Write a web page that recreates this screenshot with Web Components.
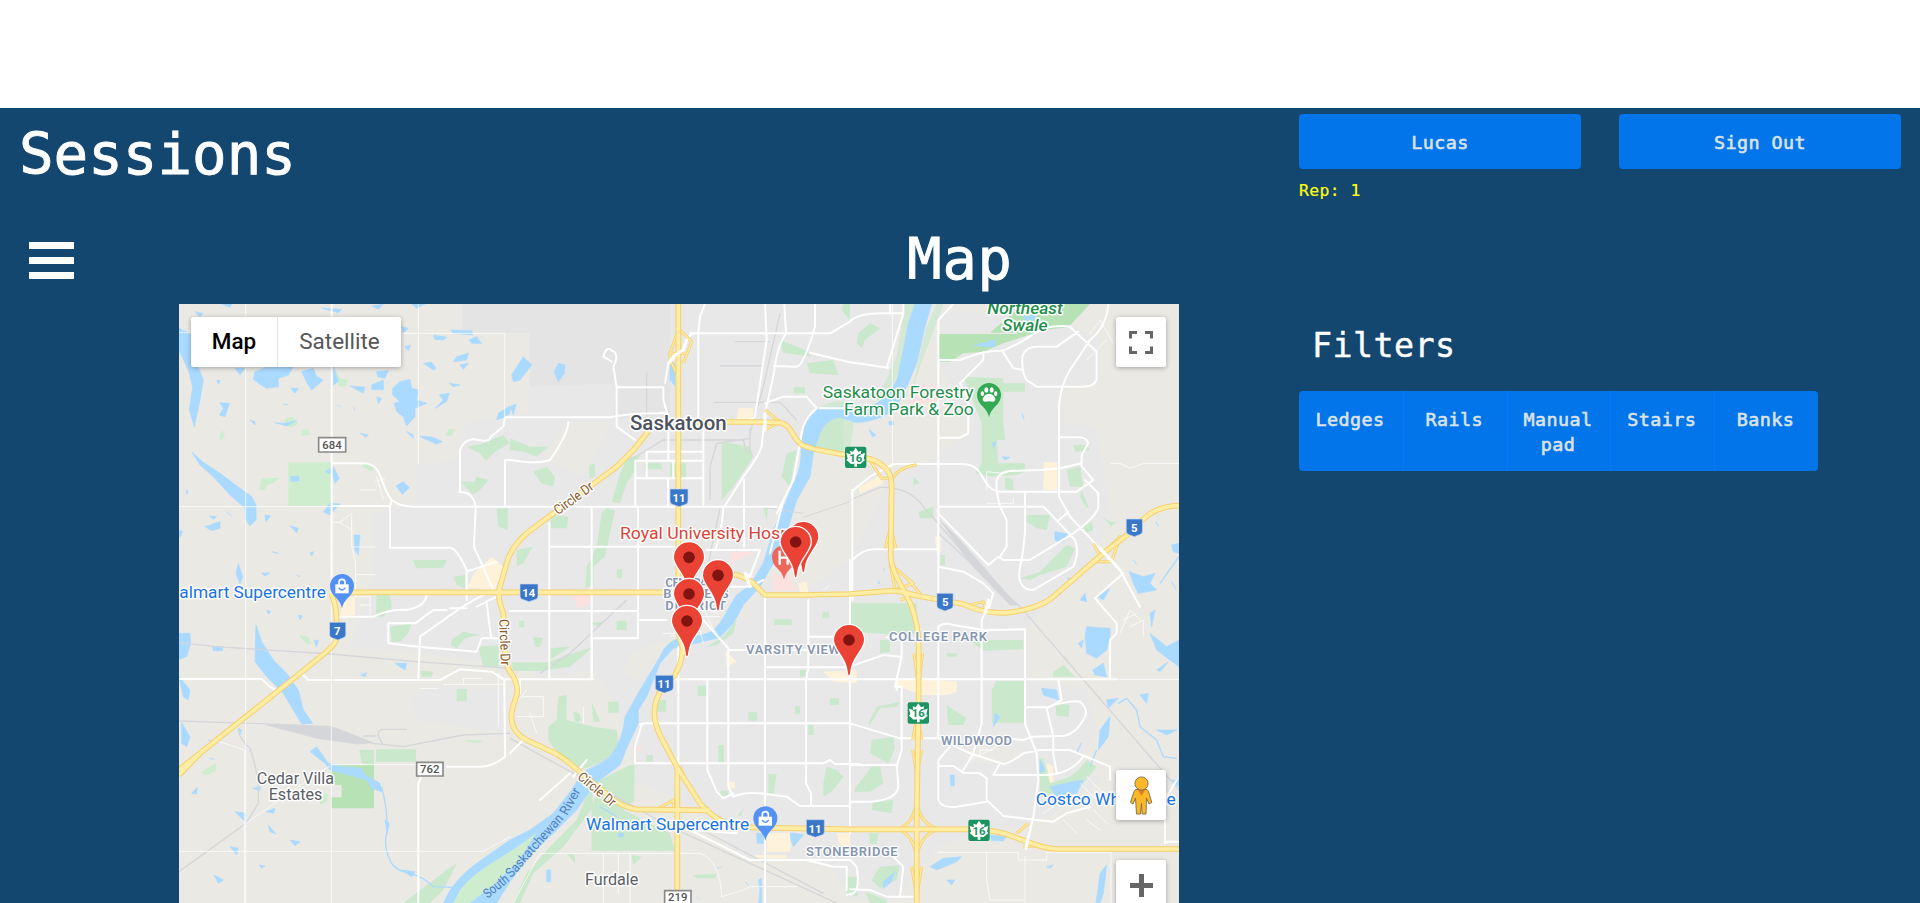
<!DOCTYPE html>
<html lang="en">
<head>
<meta charset="utf-8">
<title>Sessions</title>
<style>
html,body{margin:0;height:100%;overflow:hidden;background:#fff}
body{font-family:"DejaVu Sans Mono",monospace;color:#fff}
</style>
</head>
<body>
<session-app></session-app>

<script>
const define = (name, html) => {
  const tpl = document.createElement('template');
  tpl.innerHTML = html;
  customElements.define(name, class extends HTMLElement {
    constructor() {
      super();
      this.attachShadow({mode: 'open'}).append(tpl.content.cloneNode(true));
    }
  });
};

define('app-button', `
<style>
:host{display:flex;box-sizing:border-box;width:282px;height:55px;padding-top:2px;align-items:center;justify-content:center;border-radius:4px;background:#0275eb;color:#dde2e8;font-size:18.4px;letter-spacing:.42px;-webkit-text-stroke:.6px #dde2e8}
</style><slot></slot>`);

define('app-header', `
<style>
:host{display:flex;justify-content:space-between;height:114px;box-sizing:border-box;padding:0 19px 0 19px}
h1{margin:11px 0 0;font-size:57.5px;line-height:72px;font-weight:400;letter-spacing:0;-webkit-text-stroke:.9px #fff}
.actions{display:grid;grid-template-columns:282px 282px;column-gap:38px;padding-top:6px;align-content:start}
.rep{color:#ffff0a;font-size:16.4px;line-height:24px;letter-spacing:.42px;margin-top:10px;-webkit-text-stroke:.2px #ffff0a}
</style>
<h1><slot></slot></h1>
<div class="actions">
  <app-button>Lucas</app-button><app-button>Sign Out</app-button>
  <div class="rep">Rep: 1</div>
</div>`);

define('menu-toggle', `
<style>
:host{display:flex;flex-direction:column;gap:8px;width:45px}
i{height:7px;background:#fff}
</style><i></i><i></i><i></i>`);

define('page-heading', `
<style>
:host{display:grid;grid-template-columns:1fr auto 1fr;align-items:center;height:82px;box-sizing:border-box;padding:0 29px 10px}
menu-toggle{margin-top:3px}
h2{margin:1px 0 0;font-size:57px;line-height:72px;font-weight:400;letter-spacing:.9px;-webkit-text-stroke:.9px #fff}
</style>
<menu-toggle></menu-toggle><h2><slot></slot></h2><span></span>`);

define('filter-panel', `
<style>
:host{display:block;width:519px}
h3{margin:0 0 25px;padding-left:13px;font-size:33.3px;line-height:40px;font-weight:400;letter-spacing:.45px;-webkit-text-stroke:.4px #fff}
.group{display:grid;grid-template-columns:repeat(5,1fr);height:80px;border-radius:4px;overflow:hidden;background:#0275eb}
.group span{padding:16px 2px 0 0;text-align:center;line-height:25px;font-size:18.4px;letter-spacing:.42px;color:#dde2e8;-webkit-text-stroke:.6px #dde2e8;border-left:1px solid #007bff}
.group span:first-child{border-left:0}
</style>
<h3>Filters</h3>
<div class="group"><span>Ledges</span><span>Rails</span><span>Manual<br>pad</span><span>Stairs</span><span>Banks</span></div>`);

define('map-control', `
<style>
:host{display:flex;width:50px;height:50px;align-items:center;justify-content:center;background:#fff;border-radius:2.5px;box-shadow:0 1px 5px rgba(0,0,0,.3)}
</style><slot></slot>`);

define('map-type-control', `
<style>
:host{display:flex;height:50px;background:#fff;border-radius:2.5px;box-shadow:0 1px 5px rgba(0,0,0,.3);font-family:Roboto,sans-serif;font-size:22.5px;line-height:48px}
span{box-sizing:border-box;text-align:center;color:#565656}
.on{width:87px;color:#000;font-weight:500;border-right:1px solid #e4e4e4}
.off{width:123px}
</style><span class="on">Map</span><span class="off">Satellite</span>`);

define('map-canvas', `
<style>
:host{display:block}
svg{display:block}
text{font-family:Roboto,sans-serif;paint-order:stroke;stroke:#fff;stroke-width:9;stroke-linejoin:round}
.town{fill:#5b6067}.poi{fill:#1a73e8}.park{fill:#1e8e4b}.hood{fill:#8595b0;font-weight:600;stroke-width:7}
.num{stroke:none;font-weight:700;text-anchor:middle}
.hw{fill:none;stroke-linejoin:round;stroke-linecap:butt}
.w{fill:none;stroke:#fff;stroke-linejoin:round;stroke-linecap:round}
</style>
<svg width="1000" height="599" viewBox="27 12 3000 1797">
<defs>
  <g id="hwy">
    <path d="M1525 12V1000L1537 1040Q1540 1080 1515 1125L1485 1155Q1455 1190 1453 1235Q1453 1275 1475 1315L1520 1400L1590 1510Q1620 1545 1660 1565Q1710 1585 1780 1583L2040 1588H2410C2490 1588 2530 1612 2580 1628Q2620 1645 2660 1647H3030"/>
    <path d="M1525 366H1780L1830 368C1870 375 1865 420 1900 437C1940 452 1990 458 2040 467C2100 475 2130 480 2155 515Q2165 530 2165 560L2162 770C2165 820 2200 860 2225 920Q2246 980 2246 1040V1200L2240 1550V1809"/>
    <path d="M1435 393L1395 445L1340 500L1130 655L1070 700Q1020 745 1010 790L990 860Q980 890 1000 940L1005 1050Q1010 1100 1020 1115Q1040 1140 1042 1170C1042 1200 1020 1220 1025 1260Q1030 1300 1070 1320L1160 1362Q1190 1380 1240 1425L1310 1482Q1350 1520 1400 1528L1620 1531"/>
    <path d="M540 877H1525M1640 818L1700 825Q1735 835 1750 850L1785 885H1900L2040 882L2170 872Q2200 875 2240 887L2380 912Q2450 945 2520 937Q2610 925 2650 890L2800 760L2890 690C2920 650 2960 617 3030 617"/>
    <path d="M484 880Q500 920 500 960V1015Q498 1030 470 1055L390 1120L27 1410M27 1425L100 1350"/>
    <path d="M1522 1400V1780"/>
  </g>
  <g id="ramps">
    <path d="M1525 90L1500 160V180L1520 220M1530 90L1565 125L1540 190M1500 160H1545M2100 482L2135 535H2155M2165 545Q2175 505 2240 494M2145 745L2162 680L2178 745M2160 790L2175 870L2230 850L2170 800M2190 900L2250 880L2215 840M1785 330L1830 365L1785 390M2400 915L2440 905L2450 940M2770 730L2790 770L2850 710L2825 785H2775M2232 1060L2245 1160L2258 1060M2228 1320L2242 1240L2255 1320M2228 1350L2240 1420L2255 1350M2225 1700L2240 1790L2255 1700M1460 1528L1510 1500V1528M2540 1600L2575 1570M2560 1640L2620 1635M1510 1390L1500 1350M1530 1400L1560 1470M2180 1588Q2232 1575 2240 1500Q2248 1575 2310 1588Q2248 1600 2240 1680Q2232 1600 2180 1588Z"/>
  </g>
  <g id="drop"><path d="M0 108C-3 108-5 101-6 93C-10 50-47 30-47 0A47 47 0 1 1 47 0C47 30 10 50 6 93C5 101 3 108 0 108Z" fill="#ea4335" stroke="#fff" stroke-width="4"/><circle r="17.5" fill="#811411"/></g>
  <path id="poi" d="M0 67Q-3 50-18 35Q-36 20-36 0A36 36 0 0 1 36 0Q36 20 18 35Q3 50 0 67Z"/>
  <g id="bag"><path fill="#fff" d="M-20-5H20V22H-20Z"/><path fill="none" stroke="#fff" stroke-width="5" d="M-9-4V-11A9 9 0 0 1 9-11V-4"/><path fill="none" stroke="#5491f5" stroke-width="4" d="M-10 5Q0 19 10 5"/></g>
  <path id="shield" d="M-27-26H27V10Q27 20 17 21L0 27L-17 21Q-27 20-27 10Z" fill="#3a77c9" stroke="#c9daf1" stroke-width="2"/>
  <g id="leaf"><rect x="-32" y="-32" width="64" height="64" rx="6" fill="#1c9462"/><path fill="#fff" d="M0-29L8-17L17-20L15-9L28-13L24 4L28 8L14 20L4 19V28H-4V19L-14 20L-28 8L-24 4L-28-13L-15-9L-17-20L-8-17Z"/></g>
</defs>
<rect x="27" y="12" width="3000" height="1800" fill="#eae9e4"/>
<!-- built-up land -->
<g fill="#e8e8e8">
<path d="M878 12H2190L2160 260L2100 310L1960 315L1900 400L1850 620L1770 830L1700 900L1480 1030L1360 1260L1280 1110L1040 1140L940 1090L760 1060L540 1040L570 960L610 840V640L740 610V495L860 480L890 365L1075 340V98H878Z"/>
<path d="M2310 30L2620 50L2790 110V250L2680 270V370L2780 380L2820 620L2780 760L2640 900L2560 1000L2570 1130L2750 1170L2780 1300L2720 1400L2800 1440L2620 1560L2300 1640L2180 1800H2040L1980 1690L1720 1670L1540 1500L1400 1440L1400 1260L1480 1060L1700 980L1800 830L1900 880L2040 780L2070 720L2160 520L2290 480L2400 400L2340 260L2305 180Z"/>
<path d="M930 1170L1010 1160V1290L920 1290L740 1260L720 1190L820 1150Z"/>
</g>
<path fill="#e4e4e4" d="M878 12H1500V360L1330 355L1340 250L1080 260V98H878Z"/>
<g fill="#eae9e4"><path d="M1190 366H1320L1300 420L1260 480L1240 530L1150 490L1120 470ZM1490 1020L1380 1060L1360 1120L1410 1140ZM1020 1100L1180 1140L1170 1300L1060 1310Z"/><path d="M2370 1350L2500 1290L2560 1370L2520 1390L2400 1390ZM1920 620L2030 600L2020 700L1950 760L1900 740Z" opacity=".8"/></g>
<!-- commercial and medical land -->
<path fill="#fef3da" d="M1705 325H1750V358H1700ZM965 770L1000 800L975 870L890 865L915 815ZM2622 487H2662V570H2620ZM2065 565L2130 525L2140 550L2070 580ZM2180 1140L2230 1135L2360 1145V1175L2330 1185H2250L2180 1155ZM1665 1050L1700 1085L1670 1100ZM1960 1115L2060 1110V1150L1990 1145ZM520 890H555V945L510 948ZM1790 1600L1862 1598V1655L1790 1655ZM2000 1600H2040V1640L2010 1635ZM2630 1390L2650 1400V1450L2640 1455ZM2295 710H2312V755H2300ZM1885 850L1910 845L1915 880L1890 875ZM1675 1445H1695V1465H1675ZM1755 1665H1850V1675H1755Z"/>
<path fill="#fbe1e0" d="M1680 755L1760 755L1680 790ZM1810 820L1860 830L1880 870L1810 875ZM1205 880H1265V905L1225 928ZM1400 1338H1415V1355H1400ZM2240 255H2310V310H2220Z"/>
<!-- parks -->
<g fill="#c9e8cc">
<path fill="#ceedce" d="M355 487H485V617H355ZM268 570L275 535L330 533L310 550L290 555L285 570ZM495 205L510 235L535 240L525 262L505 258ZM345 355L370 350L383 370L365 382L342 375ZM395 390L415 388L420 405L395 408ZM155 390L165 405L155 424L147 412ZM835 387L856 388L845 407H826ZM387 1005L415 1010L425 1030L410 1033ZM95 1415L138 1390V1410L120 1422L100 1425ZM445 1490L475 1480L470 1505L450 1515ZM580 485L615 505L605 515L578 500ZM885 1320L940 1322L930 1328L890 1327Z"/>
<path fill="#b6e2b6" d="M483 1395H612V1525H483V1492H515V1455H483ZM2307 102H2540L2620 12H2760L2695 82L2620 90L2500 130L2440 155L2380 160L2340 185H2307ZM2460 98L2560 12H2640L2560 98Z"/>
<path d="M568 1350H612V1395L575 1390ZM618 1348H738V1385H618ZM890 440L935 432L1000 405L1020 430L975 455L948 482L930 460ZM872 545L915 545L918 530L955 540L930 570L910 585ZM980 625H1013V690L985 680ZM728 780H830L820 803L740 805ZM850 830L885 825V865L860 855ZM620 885H660L665 920L640 950H618ZM660 980L725 970L715 1000L690 1025H665ZM845 1020L880 995L930 1005L885 1015L860 1045L842 1035ZM925 1040L985 1036V1100L940 1102ZM752 1112L790 1115L785 1130H755ZM860 1167H890V1204H860ZM700 1809L830 1710L860 1690L820 1770L780 1809Z"/>
<path d="M1020 415L1080 440L1135 440L1100 470L1060 455L1020 450ZM1090 515L1130 500L1155 530L1150 560L1115 550ZM1258 495L1275 490V530L1258 535ZM1370 475L1410 465L1390 520L1370 550L1350 610L1325 605L1350 520ZM1425 490H1475V508H1425ZM1500 490H1548V530H1500ZM1310 625L1335 630L1320 700L1305 770L1270 800V860H1246L1250 800L1280 740L1295 640ZM1655 425L1740 440L1750 470L1690 560L1655 600ZM1830 120L1905 150L1925 170L1840 158ZM1910 190L1990 180L2005 225L1920 220ZM1870 262H1905V280H1870ZM1850 460L1880 450L1860 560L1835 530ZM1920 350L2020 340V470L1930 450L1940 400ZM2020 12H2040V60L2015 30ZM1040 750L1088 740L1060 790L1040 800ZM1145 645L1195 650L1190 685H1140ZM1340 808H1356V833H1340ZM1780 625L1795 620L1790 660Z"/>
<path d="M1950 320Q2010 290 2060 310L2040 450L1930 440ZM2205 12H2240L2190 200L2150 310L2120 300L2180 170ZM2270 80L2300 12H2320L2250 200L2220 290Z" opacity=".7"/>
<path d="M2100 70L2130 85L2085 120L2075 145L2060 130L2065 100ZM2380 230L2500 235V370L2505 420H2480L2485 490H2565V515L2540 525L2465 530L2415 520L2435 490V370ZM2230 530L2250 550L2230 555ZM2245 635L2290 620V655H2250ZM2460 250H2565V275H2460ZM2570 645H2640L2630 690L2600 685L2570 665ZM2505 530L2530 540V570L2505 568ZM2690 510L2730 500L2740 560L2700 560ZM2710 435H2750L2760 450L2715 455ZM2735 570L2755 620L2750 625L2730 590ZM2740 680L2765 665L2770 690L2750 698ZM2550 835L2610 815L2690 735L2715 745L2690 800L2610 825L2580 840ZM2795 650L2820 665H2840L2825 678ZM2312 765H2325V795H2312ZM2040 910H2240V1000L2200 1005L2040 995ZM2130 1020H2160V1055L2130 1060ZM2380 1005L2440 1020H2560V1048L2440 1052ZM2330 1060H2360V1070H2330ZM2480 1143H2562V1268H2465V1170ZM2330 1215L2390 1255L2380 1275H2335ZM2095 1270L2120 1220L2190 1205L2180 1220L2130 1225L2100 1275ZM2105 1320L2170 1310L2175 1345L2155 1390L2100 1360ZM2105 1400H2130L2140 1450L2100 1475H2055V1465ZM2110 1508L2170 1500L2165 1540L2105 1530ZM2650 1115L2680 1095L2715 1130L2650 1130ZM2655 1210L2700 1215L2695 1250L2660 1248ZM2608 1375H2620L2640 1450L2700 1430L2725 1410L2750 1380L2780 1400L2740 1450L2700 1490L2610 1480Z"/>
<path d="M1027 1087H1130L1270 1040L1200 1100L1110 1113H1027ZM1140 1045L1200 1040L1140 1080ZM1048 962H1063V982H1048ZM1090 1010L1120 1015L1110 1040H1095ZM1340 962H1370V990H1340ZM1260 970L1295 965L1290 980ZM1165 1190L1190 1185V1260L1270 1280L1340 1290L1350 1350L1290 1390L1230 1410L1170 1370L1135 1320V1280L1160 1260ZM1315 1205H1346V1238H1315ZM1210 1235Q1235 1235 1232 1260Q1210 1280 1210 1235ZM1265 1205L1290 1265H1270ZM1265 1530L1290 1440L1380 1395H1393V1500L1360 1530L1500 1600L1515 1652H1265ZM1583 1157H1608V1188H1583ZM1465 1200H1488V1235H1460ZM1430 1365H1448V1385H1430ZM1813 958H1865V975H1813ZM1957 935H1977V955H1957ZM1735 1237H1762V1262H1735ZM1875 1218H1890V1243H1875ZM1980 1195H2007V1215H1980ZM1645 1335H1662V1390H1645ZM1795 1422H1820L1810 1480H1795ZM1915 1275H1930V1305H1915ZM1970 1400L2000 1410L2020 1430L1990 1470L1960 1490V1450ZM1650 1475Q1675 1465 1675 1485L1655 1490ZM1890 1110H1908V1130H1890ZM1610 1040L1660 1010L1700 960L1690 1000L1640 1035L1590 1045ZM1570 1725L1640 1722L1635 1735H1580ZM1385 1665L1415 1670L1390 1695ZM1190 1660L1215 1665V1690ZM2025 1730H2062V1790L2030 1780ZM2098 1600H2125L2120 1632H2100ZM2130 1700L2190 1695L2180 1740L2130 1765L2105 1740ZM2085 1775L2150 1800V1809H2100ZM1700 1550L1720 1525L1715 1545ZM1030 1809L1070 1720L1140 1640L1220 1560L1265 1450L1270 1520L1180 1640L1090 1720L1050 1809Z"/>
</g>
<!-- river and lakes -->
<g fill="#aadaff" stroke="#aadaff" stroke-width="2" stroke-linejoin="round">
<path d="M2235 12L2215 70L2200 150L2182 235Q2160 290 2120 310Q2080 325 2020 320L1950 325Q1915 340 1900 390L1893 450Q1895 500 1875 540L1850 600L1810 690L1780 790L1740 855L1700 885L1675 925Q1650 980 1620 997Q1590 1010 1560 1007Q1490 1015 1470 1070Q1440 1120 1410 1170L1365 1250Q1360 1320 1320 1370Q1290 1395 1250 1410Q1220 1440 1205 1470L1150 1540L1080 1590L1020 1620L920 1690Q850 1740 820 1809H980L1020 1745L1080 1665L1150 1600L1220 1530L1255 1480L1290 1440L1350 1395L1372 1340L1405 1270V1230L1430 1190L1470 1090L1510 1045L1580 1030L1650 1012L1690 970L1720 915L1770 860L1810 790L1850 700L1880 600L1920 530L1930 460L1950 400Q1970 355 2010 352L2060 368Q2140 362 2180 320L2215 250L2240 190L2265 80L2285 12Z"/>
<path d="M27 85L70 105L80 190L100 240L88 310L73 380L58 330L68 260L55 210L27 150Z"/>
<path d="M66 457L100 487L150 520L200 557L245 590L258 615V660L240 678L228 660L225 625L180 585L130 530L90 495Z"/>
<path d="M258 975L275 1025L310 1080L350 1120L385 1170L400 1230L428 1270L395 1272L340 1180L290 1130L255 1085Z"/>
<path d="M255 215L290 200H370L355 225L325 235V260L290 265L265 250L250 238ZM395 215L430 205L440 230L460 240L425 270L412 250ZM490 200L505 245L490 255ZM540 258L585 262L580 280ZM620 215L655 212L645 235L622 230ZM605 255L640 240V270L605 268ZM620 290L635 295L625 312ZM668 265L690 245L720 238L725 265L745 270L740 300L770 310L735 325V350L710 378L700 350L680 335L672 310L690 305L668 285ZM760 190L785 187L798 205L790 210ZM790 105L830 112L820 120L795 118ZM842 90L905 92L908 105L850 100ZM897 120L920 110L935 130L905 130ZM705 140L722 135L715 152ZM860 170L895 160L890 180L850 185ZM870 195L895 190L880 208ZM838 250L870 255L850 260ZM808 285L838 280L830 305L795 325L820 300ZM150 308L178 310L165 350L148 345L160 325ZM195 205L225 205L210 225ZM140 240L152 243L145 252ZM240 360L255 365V375ZM315 368L345 370L380 362L350 378ZM340 312L355 315ZM362 265L385 265L375 280ZM570 400L595 405L588 412ZM710 395L730 405V415ZM750 408L790 412L817 425L800 432L760 415ZM980 360L985 340L1020 318V340L1005 350ZM695 80L715 85L700 98ZM725 12H765L740 25ZM605 18L640 12L625 28ZM155 12H185L180 22ZM455 25L515 28L505 38ZM75 35L98 40L90 50ZM500 315L512 320M552 320L554 332"/>
<path d="M465 515L490 500L508 535L495 550L488 525ZM360 530L385 528L388 542L365 545ZM678 557L700 545L718 563L697 583ZM460 635L480 610L510 612L480 645ZM285 645L302 648L288 665ZM105 680L150 665V685L125 692ZM118 648L140 650L130 658ZM360 678L385 685L380 698ZM170 636L185 648ZM205 790L218 830L210 852L198 820ZM275 820L300 818L285 828ZM305 755L325 760ZM420 758L432 755L425 768ZM552 705L570 705L565 765L555 750ZM380 825L390 830ZM27 690L38 695L30 712ZM48 570L55 575L50 583ZM27 1000L60 1000L62 1030L50 1070L27 1078ZM127 1040H158V1052H130ZM27 1130L60 1170L55 1200L40 1190ZM35 1268L60 1310L50 1340L35 1330ZM290 930L303 935L295 942ZM385 945L397 948L390 960ZM432 1022L445 1020L440 1040ZM675 1090L710 1090L705 1110L690 1100ZM572 1125L590 1118L585 1130ZM420 1355L440 1340L475 1390L515 1400L575 1405L585 1425L630 1450L635 1475L605 1465L590 1440L480 1410L465 1390ZM205 1285L215 1290L210 1305ZM65 1480L82 1462L80 1482ZM195 1535L228 1540L225 1565ZM250 1465L272 1460L268 1472ZM288 1535L315 1525L310 1540ZM295 1575L318 1602L300 1595ZM360 1620L390 1625L375 1637ZM180 1640L205 1645L200 1665ZM268 1695L285 1698L275 1705ZM132 1725L160 1740L145 1750ZM645 1560L658 1570L652 1600ZM695 1710L735 1715L725 1730ZM115 1320L130 1325ZM118 1375L133 1378Z"/>
<path d="M1060 170L1085 195L1050 240L1030 245L1025 225ZM1165 190L1185 195L1183 220L1165 245L1152 215ZM1500 190L1515 190V258L1500 240ZM1020 320L1038 312L1030 345ZM2415 135L2475 120V140L2440 140ZM2560 50L2600 45L2590 60H2565ZM2157 364H2170V375H2157ZM2098 390L2118 405L2108 412ZM2468 428L2478 425L2470 445ZM2497 470L2520 472L2505 480ZM2556 340L2562 358ZM2655 695L2695 702L2680 725L2655 722ZM2878 815L2920 830L2955 820L2940 850L2960 870L2905 880L2890 850ZM2890 780L2900 792ZM2958 665L2965 680ZM3005 735L3027 730V760L3010 755ZM3005 845L3018 868ZM2690 835L2712 835L2700 845ZM2780 890L2820 865L2800 900ZM2730 900L2745 880L2750 905ZM2138 805L2145 812ZM2125 842L2128 852Z"/>
<path d="M2750 980L2820 985V1010L2810 1050L2780 1075L2750 1060L2745 1010ZM2725 1030L2740 1020L2735 1045ZM2768 1110L2800 1090L2810 1130L2775 1125ZM2940 1000L2990 1040L3027 1020V1100L2960 1050ZM2960 1110L2995 1085L2970 1115ZM2940 940L2955 930L2945 980ZM2810 1200L2845 1195L2830 1210L2815 1225ZM2790 1290L2820 1250L2815 1310L2785 1350ZM2910 1185L2935 1180L2930 1210ZM2960 1290L3020 1290L2990 1305ZM2720 1360L2735 1328L2725 1345ZM2615 1165L2660 1170L2665 1200L2620 1185ZM2475 1240L2490 1250L2470 1280ZM2340 1425H2353V1458H2343ZM2640 1460L2710 1445L2740 1440L2720 1480L2660 1490ZM2610 1380L2625 1410L2610 1420ZM2280 1700L2320 1675L2375 1670L2360 1685L2300 1710ZM2330 1740L2355 1740L2345 1755ZM2630 1700L2650 1695L2640 1705ZM2790 1720L2810 1695L2800 1780L2790 1809H2778L2785 1760ZM2140 1745L2175 1715L2160 1750L2140 1765ZM2460 1605L2510 1610L2500 1622H2465ZM1130 1710H1142V1745H1130ZM1345 1600L1360 1600V1610H1345ZM1760 1600L1780 1600V1630H1762ZM1860 1600H1875L1900 1605L1870 1640L1862 1615ZM1725 1745L1735 1755ZM1765 1740L1775 1735V1809H1766L1770 1770ZM1640 1705L1655 1700M1580 1790L1588 1798M2880 1410H2900M3000 1440L3027 1440V1460Z"/>
<path fill="none" stroke-width="4" d="M635 1460Q655 1540 650 1600Q640 1640 660 1680Q670 1710 720 1720Q760 1730 790 1760L850 1762M2845 1210L2870 1195L2900 1230L2910 1280L2960 1320L2980 1370L3020 1375M2780 1350L2760 1400M1290 1520L1340 1550M2970 850L3027 770" />
</g>
<path fill="#ceedce" d="M870 1770Q910 1720 980 1680Q1060 1630 1100 1598L1040 1690L975 1750L900 1809H850Z"/>
<!-- rail lines -->
<g fill="none" stroke="#d4d6da" stroke-width="4">
<path d="M27 1028L140 1040L480 1062L740 1085L1020 1105M27 1263L250 1270L480 1280L610 1330L700 1340L880 1305L1020 1300M27 1715L228 1570M205 1290Q210 1320 240 1345Q270 1430 265 1510L228 1570M640 1335Q610 1290 640 1288H710M580 1308H620M1020 1315L1320 1480L1500 1580L2000 1809M1540 1560L1960 1780M1740 385V420Q1740 500 1720 420L1480 420L1380 480M1370 900L1200 1060L1110 1120M1620 600V500L1640 430L1740 415M1600 860L1650 625M1430 215V350M1695 125H1800M1650 198H1780M1630 307H1830L1880 360M1830 40L1780 260L1740 400M2040 600L2130 562Q2220 560 2260 620L2400 780L2550 920L3027 1470M2305 700L2530 905"/>
<path fill="#d4d6da" d="M290 1275L380 1275L500 1285L610 1328L560 1332L440 1315ZM2310 660L2370 720L2540 915L2520 915L2400 790Z" stroke-width="2"/>
<path d="M1900 640L1770 620M1900 652L2040 605" stroke-width="3"/>
</g>
<!-- minor roads -->
<g class="w" stroke-width="3" opacity=".75">
<path d="M227 12V1809M745 12V490M484 620V1809M27 620H485M27 98H120M700 100H1004V350M486 667H510L545 640V690L510 667M545 690V740L557 790V890M545 741H615M557 824H615M570 570H615M620 530L640 600M615 545L645 535M27 1654H940L1020 1610M150 1325L223 1350V1809M228 1570L400 1450L480 1398M750 1165H805M820 1153H1000M880 1153V1135H935M985 1120V1280M483 1394H738M555 890H600V945M570 915H600"/>
<path d="M1040 1250H1120V1190H1060M1070 1170L1020 1235M1080 1240L1100 1300M1240 1220V1270M1030 1809L1110 1660H1480L1590 1660Q1650 1680 1655 1790L1720 1770L1740 1760H1880M1300 1660V1809M1345 1660V1780M1380 1660V1809M2167 12V500M2823 490H2850L2880 505L2920 490H3027M2305 1657H2545V1680H2630V1657H2820M2450 1657V1740L2460 1800H2560M2565 1670V1809M2823 1640V1809M2760 100L2790 60L2830 130M2750 180L2810 120M2780 1138H3027M2850 1000L2880 930L2910 960M2860 960L2900 940M2880 980L2920 960V1005M2750 1430L2800 1480M2730 1450L2780 1500M2700 1480L2760 1530M2620 1540L2650 1520M2680 1560L2720 1600M2770 1530L2810 1570M2750 1560L2790 1590M2400 1380L2480 1340M2430 1370V1350H2470M1960 870L1980 855M1500 1010L1580 990M1480 1000H1540M1590 900L1620 970L1640 1000M1600 950H1650M1610 930L1645 940M1600 1030L1590 990M2450 570V515L2500 520M2450 610H2530V595"/>
</g>
<!-- arterial roads -->
<g class="w" stroke-width="6">
<path d="M485 12V880M485 490H580C640 490 630 560 665 600Q690 620 730 620H1020M485 618H660V743H840Q860 745 890 810V900M890 815L980 785M660 620L665 600M870 575V450Q880 420 910 417Q960 430 962 410L1000 380L1005 352H1320Q1380 340 1460 340L1490 338M868 576Q910 575 917 620L912 740L970 870M1020 480H1005V618M970 870L920 895L870 925L750 1010L745 1135M500 950H612Q660 925 710 930Q770 920 770 880M655 970H735L790 930H830M655 970V1030L745 1040L920 1055L935 1015H985M950 910L963 1010M27 1137H275L300 1160L320 1172M400 1125L415 1140H810L870 1108L965 1115L1000 1138H1270M1003 1138L1005 1370Q970 1400 930 1400L830 1400M745 1809V1450L755 1428M890 925H840M980 890L920 920"/>
<path d="M1340 350V380L1395 420M1195 366Q1195 400 1140 480Q1110 490 1060 485L1020 480M1325 152Q1350 160 1330 200L1340 262V350M1325 152Q1310 135 1300 170L1325 185M1340 262H1480V300L1495 350V480M1485 250L1495 190L1540 150Q1550 100 1580 100M1560 100H1980L2040 65Q2060 40 2140 40H2200M1585 100V370L1600 390V615M1585 100L1590 50L1605 12M1785 12L1790 120L1755 350L1740 362M1843 12L1848 100Q1820 140 1812 220L1785 340L1775 440Q1765 470 1720 530L1660 625Q1655 700 1635 750M1935 12V80Q1900 200 1880 200L1812 198M1920 158L2040 187L2155 203M1785 310L1840 290H1910L1940 325M1020 620H1820M1396 482H1600M1430 455H1600M1430 455V535M1396 482V615M1396 535H1600M1510 482V535M1494 540V620M1138 670V1138M1138 740H1520M1265 620V1138M1404 620V1015H1265M1722 540V740M1610 750H1770L1740 830M1840 600L1800 760M1940 325Q1900 360 1895 400L1870 540L1820 640M2040 325L1950 325" />
<path d="M2160 12V40M2200 12V40L2150 205M2305 880V60L2350 12M2305 180H2370Q2440 150 2500 152L2545 130L2620 85Q2670 75 2700 80L2780 155V240Q2770 260 2740 260H2600L2570 240Q2555 220 2557 170Q2565 140 2600 140H2660L2725 95M2815 12Q2810 80 2760 120L2700 210Q2670 260 2667 320V590L2700 650L2850 810L2910 920M2495 150L2530 205L2560 210M2440 155V180L2370 250L2395 300V400L2370 413H2305M2050 570L2100 530L2170 492H2380C2450 495 2430 570 2490 575H2720L2770 540L2735 500V465L2755 430Q2750 410 2720 412H2667M2480 575V540Q2490 510 2540 512L2610 510L2670 505L2735 490M2745 540L2785 580V620Q2780 650 2710 700L2580 780H2500L2485 770L2455 795L2305 640M2565 580V690Q2565 710 2555 780Q2530 870 2590 870L2710 800Q2730 760 2715 720L2640 640L2620 620H2307M2480 575L2490 620L2510 660V740L2490 770M2667 660L2695 635M2047 780Q2080 745 2120 748H2300M2047 570V900M2305 800L2380 815L2440 850L2470 880L2455 930M2860 820L2775 895L2840 970V1000L2820 1020V1137M2040 780V1600" />
<path d="M1020 933H1400M1404 960H1490M1050 1138V1180M1265 1138V1015M1020 1360L1060 1320M1500 1138H2840M1525 1040V1400M1785 885V1809M1675 1045V1460L1690 1490Q1720 1475 1770 1480L1850 1490L1890 1518H2040M1612 1140V1410L1640 1475L1660 1495L1690 1480M1395 1390V1340L1415 1275Q1400 1272 1430 1270H2040L2190 1315H2300M1395 1390H1960L1980 1380L1995 1392H2070M1680 1050H1960M1790 1102H2040M1910 1138V1120L1915 1110V900M1908 1138V1450L1923 1480V1515M1915 1010H2020M1560 1000L1600 960L1635 1000L1675 1045M1780 840L1740 860L1680 860M1700 1600L1560 1590L1740 1680H2040L2060 1700Q2070 1770 2050 1780L2030 1785M1910 1680L1990 1700H2030V1770M1210 1430L1250 1380M1110 1500L1200 1420"/>
<path d="M2040 1100L2140 1065L2190 1070M2195 1000V1070L2175 1160H2195V1350L2180 1400M2180 1140V1170M2150 1012H2190M2305 1138V980Q2320 965 2350 975L2440 990L2565 988V1270L2600 1360L2605 1440L2590 1550L2568 1645M2305 1138V1315L2400 1360L2500 1392Q2520 1390 2560 1360L2610 1350H2700L2820 1400V1440M2435 1140V960L2455 920M2435 1138V1270L2410 1360L2380 1410M2305 1398H2350L2380 1418L2430 1420L2450 1435V1500L2500 1548L2600 1560L2650 1565L2690 1540L2760 1520M2340 1340L2305 1380V1500Q2315 1525 2360 1520L2450 1505M2490 1390L2470 1425H2620Q2700 1425 2740 1370M2570 1222H2630Q2700 1200 2730 1205Q2760 1230 2740 1260Q2710 1310 2670 1308L2590 1310L2560 1320L2500 1315M2665 1140L2675 1200L2630 1225L2650 1310V1360L2660 1420M2040 1395H2180L2185 1460Q2180 1500 2100 1505H2040M2040 1768L2100 1770L2150 1790L2230 1790M2190 1790L2200 1700L2170 1670M2985 1630V1500L3020 1440M2985 1625H3027"/>
</g>
<g class="hw">
<use href="#ramps" stroke="#f6d272" stroke-width="9"/><use href="#ramps" stroke="#feeba2" stroke-width="4"/>
<use href="#hwy" stroke="#f8cf6b" stroke-width="17"/><use href="#hwy" stroke="#feeda5" stroke-width="11"/>
</g>
<path class="w" stroke-width="9" d="M1495 190L1515 165L1540 150L1550 120M1740 860L1725 820L1740 830M2455 900L2445 940M2790 745L2850 810M2568 1645L2575 1610M1785 340L1785 390"/>
<!-- route numbers -->
<g fill="#fff" font-size="34">
<g fill="#fff" stroke="#8a8a8a" stroke-width="5"><path d="M446 413H527V456H446ZM740 1387H819V1428H740ZM1484 1772H1563V1816H1484Z"/></g>
<g fill="#545454"><text class="num" x="486" y="447" style="font-weight:500">684</text><text class="num" x="779" y="1420" style="font-weight:500">762</text><text class="num" x="1523" y="1804" style="font-weight:500">219</text></g>
<use href="#shield" x="1527" y="593"/><use href="#shield" x="1077" y="878"/><use href="#shield" x="1483" y="1152"/><use href="#shield" x="1936" y="1585"/>
<use href="#shield" transform="translate(2893 683) scale(.9 1)"/><use href="#shield" transform="translate(2325 906) scale(.9 1)"/><use href="#shield" transform="translate(503 993) scale(.9 1)"/>
<text class="num" x="1527" y="606">11</text><text class="num" x="1076" y="891">14</text><text class="num" x="1482" y="1164">11</text><text class="num" x="1935" y="1598">11</text>
<text class="num" x="2893" y="696">5</text><text class="num" x="2326" y="919">5</text><text class="num" x="502" y="1005">7</text>
<use href="#leaf" x="2057" y="472"/><use href="#leaf" x="2245" y="1239"/><use href="#leaf" x="2427" y="1591"/>
<g fill="#1c9462"><text class="num" x="2057" y="485">16</text><text class="num" x="2245" y="1252">16</text><text class="num" x="2427" y="1604">16</text></g>
</g>
<!-- place names -->
<g font-size="52">
<text x="1380" y="389" font-size="62" textLength="290" lengthAdjust="spacingAndGlyphs" fill="#4b535f" style="font-weight:500">Saskatoon</text>
<text class="town" x="260" y="1451" textLength="232" lengthAdjust="spacingAndGlyphs">Cedar Villa</text>
<text class="town" x="296" y="1500" textLength="161" lengthAdjust="spacingAndGlyphs">Estates</text>
<text class="town" x="1245" y="1754" textLength="160" lengthAdjust="spacingAndGlyphs">Furdale</text>
<text class="poi" x="28" y="893" textLength="440" lengthAdjust="spacingAndGlyphs">almart Supercentre</text>
<text class="poi" x="1248" y="1591" textLength="490" lengthAdjust="spacingAndGlyphs">Walmart Supercentre</text>
<text class="poi" x="2597" y="1516" textLength="420" lengthAdjust="spacingAndGlyphs">Costco Wholesale</text>
<text class="park" x="1958" y="294" textLength="453" lengthAdjust="spacingAndGlyphs">Saskatoon Forestry</text>
<text class="park" x="2022" y="346" textLength="389" lengthAdjust="spacingAndGlyphs">Farm Park &amp; Zoo</text>
<g font-style="italic" style="font-weight:500" font-size="50"><text class="park" x="2452" y="41" textLength="226" lengthAdjust="spacingAndGlyphs">Northeast</text><text class="park" x="2497" y="93" textLength="136" lengthAdjust="spacingAndGlyphs">Swale</text></g>
<text x="1350" y="716" fill="#db4437" textLength="582" lengthAdjust="spacingAndGlyphs">Royal University Hospital</text>
<g font-size="39">
<text class="hood" x="1486" y="860" textLength="145">CENTRAL</text>
<text class="hood" x="1480" y="895" textLength="196">BUSINESS</text>
<text class="hood" x="1486" y="930" textLength="182">DISTRICT</text>
<text class="hood" x="1728" y="1061" textLength="282">VARSITY VIEW</text>
<text class="hood" x="2157" y="1024" textLength="294">COLLEGE PARK</text>
<text class="hood" x="2313" y="1335" textLength="213">WILDWOOD</text>
<text class="hood" x="1908" y="1668" textLength="275">STONEBRIDGE</text>
</g>
<g font-size="41" fill="#8a5a2b">
<text transform="translate(1164 646) rotate(-36)" textLength="136" lengthAdjust="spacingAndGlyphs">Circle Dr</text>
<text transform="translate(988 958) rotate(88)" textLength="139" lengthAdjust="spacingAndGlyphs">Circle Dr</text>
<text transform="translate(1220 1435) rotate(40)" textLength="136" lengthAdjust="spacingAndGlyphs">Circle Dr</text>
</g>
<g fill="#4f7fc0" font-size="40">
<text style="stroke:none" transform="translate(953 1796) rotate(-39)" textLength="86" lengthAdjust="spacingAndGlyphs">South</text>
<text style="stroke:none" transform="translate(1024 1735) rotate(-48.500)" textLength="238" lengthAdjust="spacingAndGlyphs">Saskatchewan</text>
<text style="stroke:none" transform="translate(1191 1548) rotate(-61)" textLength="86" lengthAdjust="spacingAndGlyphs">River</text>
</g>
</g>
<use href="#poi" x="516" y="858" fill="#5491f5"/><use href="#bag" x="516" y="858"/>
<use href="#poi" x="1786" y="1555" fill="#5491f5"/><use href="#bag" x="1786" y="1555"/>
<use href="#poi" x="2457" y="285" fill="#34a853"/>
<g fill="#fff"><path d="M2457 281Q2468 281 2474 292Q2480 304 2468 305Q2457 302 2446 305Q2434 304 2440 292Q2446 281 2457 281Z"/><ellipse cx="2449" cy="270" rx="6" ry="8"/><ellipse cx="2465" cy="270" rx="6" ry="8"/><ellipse cx="2437" cy="281" rx="5" ry="7"/><ellipse cx="2477" cy="281" rx="5" ry="7"/></g>
<use href="#poi" x="1842" y="772" fill="#ee675c"/><path d="M1829 752V794M1853 752V794M1829 773H1853" stroke="#fff" stroke-width="7"/>
<use href="#drop" x="1900" y="711"/><use href="#drop" x="1877" y="726"/><use href="#drop" x="1557" y="772"/><use href="#drop" x="1644" y="826"/><use href="#drop" x="1557" y="882"/><use href="#drop" x="1551" y="963"/><use href="#drop" x="2037" y="1020"/>
</svg>`);

define('city-map', `
<style>
:host{display:block;position:relative;width:1000px;height:599px;overflow:hidden}
map-type-control{position:absolute;left:12px;top:13px}
.fs,.peg,.zoom{position:absolute;right:13px}
.fs{top:13px}.peg{top:466px}.zoom{top:556px}
.zoom{height:101px;align-items:flex-start}
svg{display:block}
</style>
<map-canvas></map-canvas>
<map-type-control></map-type-control>
<map-control class="fs"><svg width="24" height="23" viewBox="0 0 24 23" fill="none" stroke="#666" stroke-width="3"><path d="M1.5 7.5V1.5H8M16 1.5h6.5v6M22.500 15.500v6H16M8 21.500H1.500v-6"/></svg></map-control>
<map-control class="peg"><svg width="23" height="39" viewBox="0.500 0.500 23 39" stroke="#7c6a48" stroke-width=".9"><path fill="#fbb829" d="M6 14H17.500L19 16L22.300 27L19.500 28.500L17 22.500L16.500 38.500H12.600L12 28L11 38.500H7L6 22.500L3.500 28.500L1 27L4.500 16Z"/><path fill="#e07b28" stroke="none" d="M8 13.500H16L12 20.500Z"/><circle cx="12" cy="8" r="6.600" fill="#fbb829"/></svg></map-control>
<map-control class="zoom"><svg style="margin-top:14px" width="23" height="23" viewBox="0 0 23 23"><path fill="#666" d="M9 0h5v9h9v5h-9v9H9v-9H0V9h9z"/></svg></map-control>`);

define('session-app', `
<style>
:host{display:block;box-sizing:border-box;height:903px;padding-top:108px;overflow:hidden;background:linear-gradient(#fff 108px,#14476f 108px)}
main{display:grid;grid-template-columns:1000px 519px;column-gap:120px;padding-left:179px}
filter-panel{margin-top:22px}
</style>
<app-header>Sessions</app-header>
<page-heading>Map</page-heading>
<main><city-map></city-map><filter-panel></filter-panel></main>`);
</script>
</body>
</html>
